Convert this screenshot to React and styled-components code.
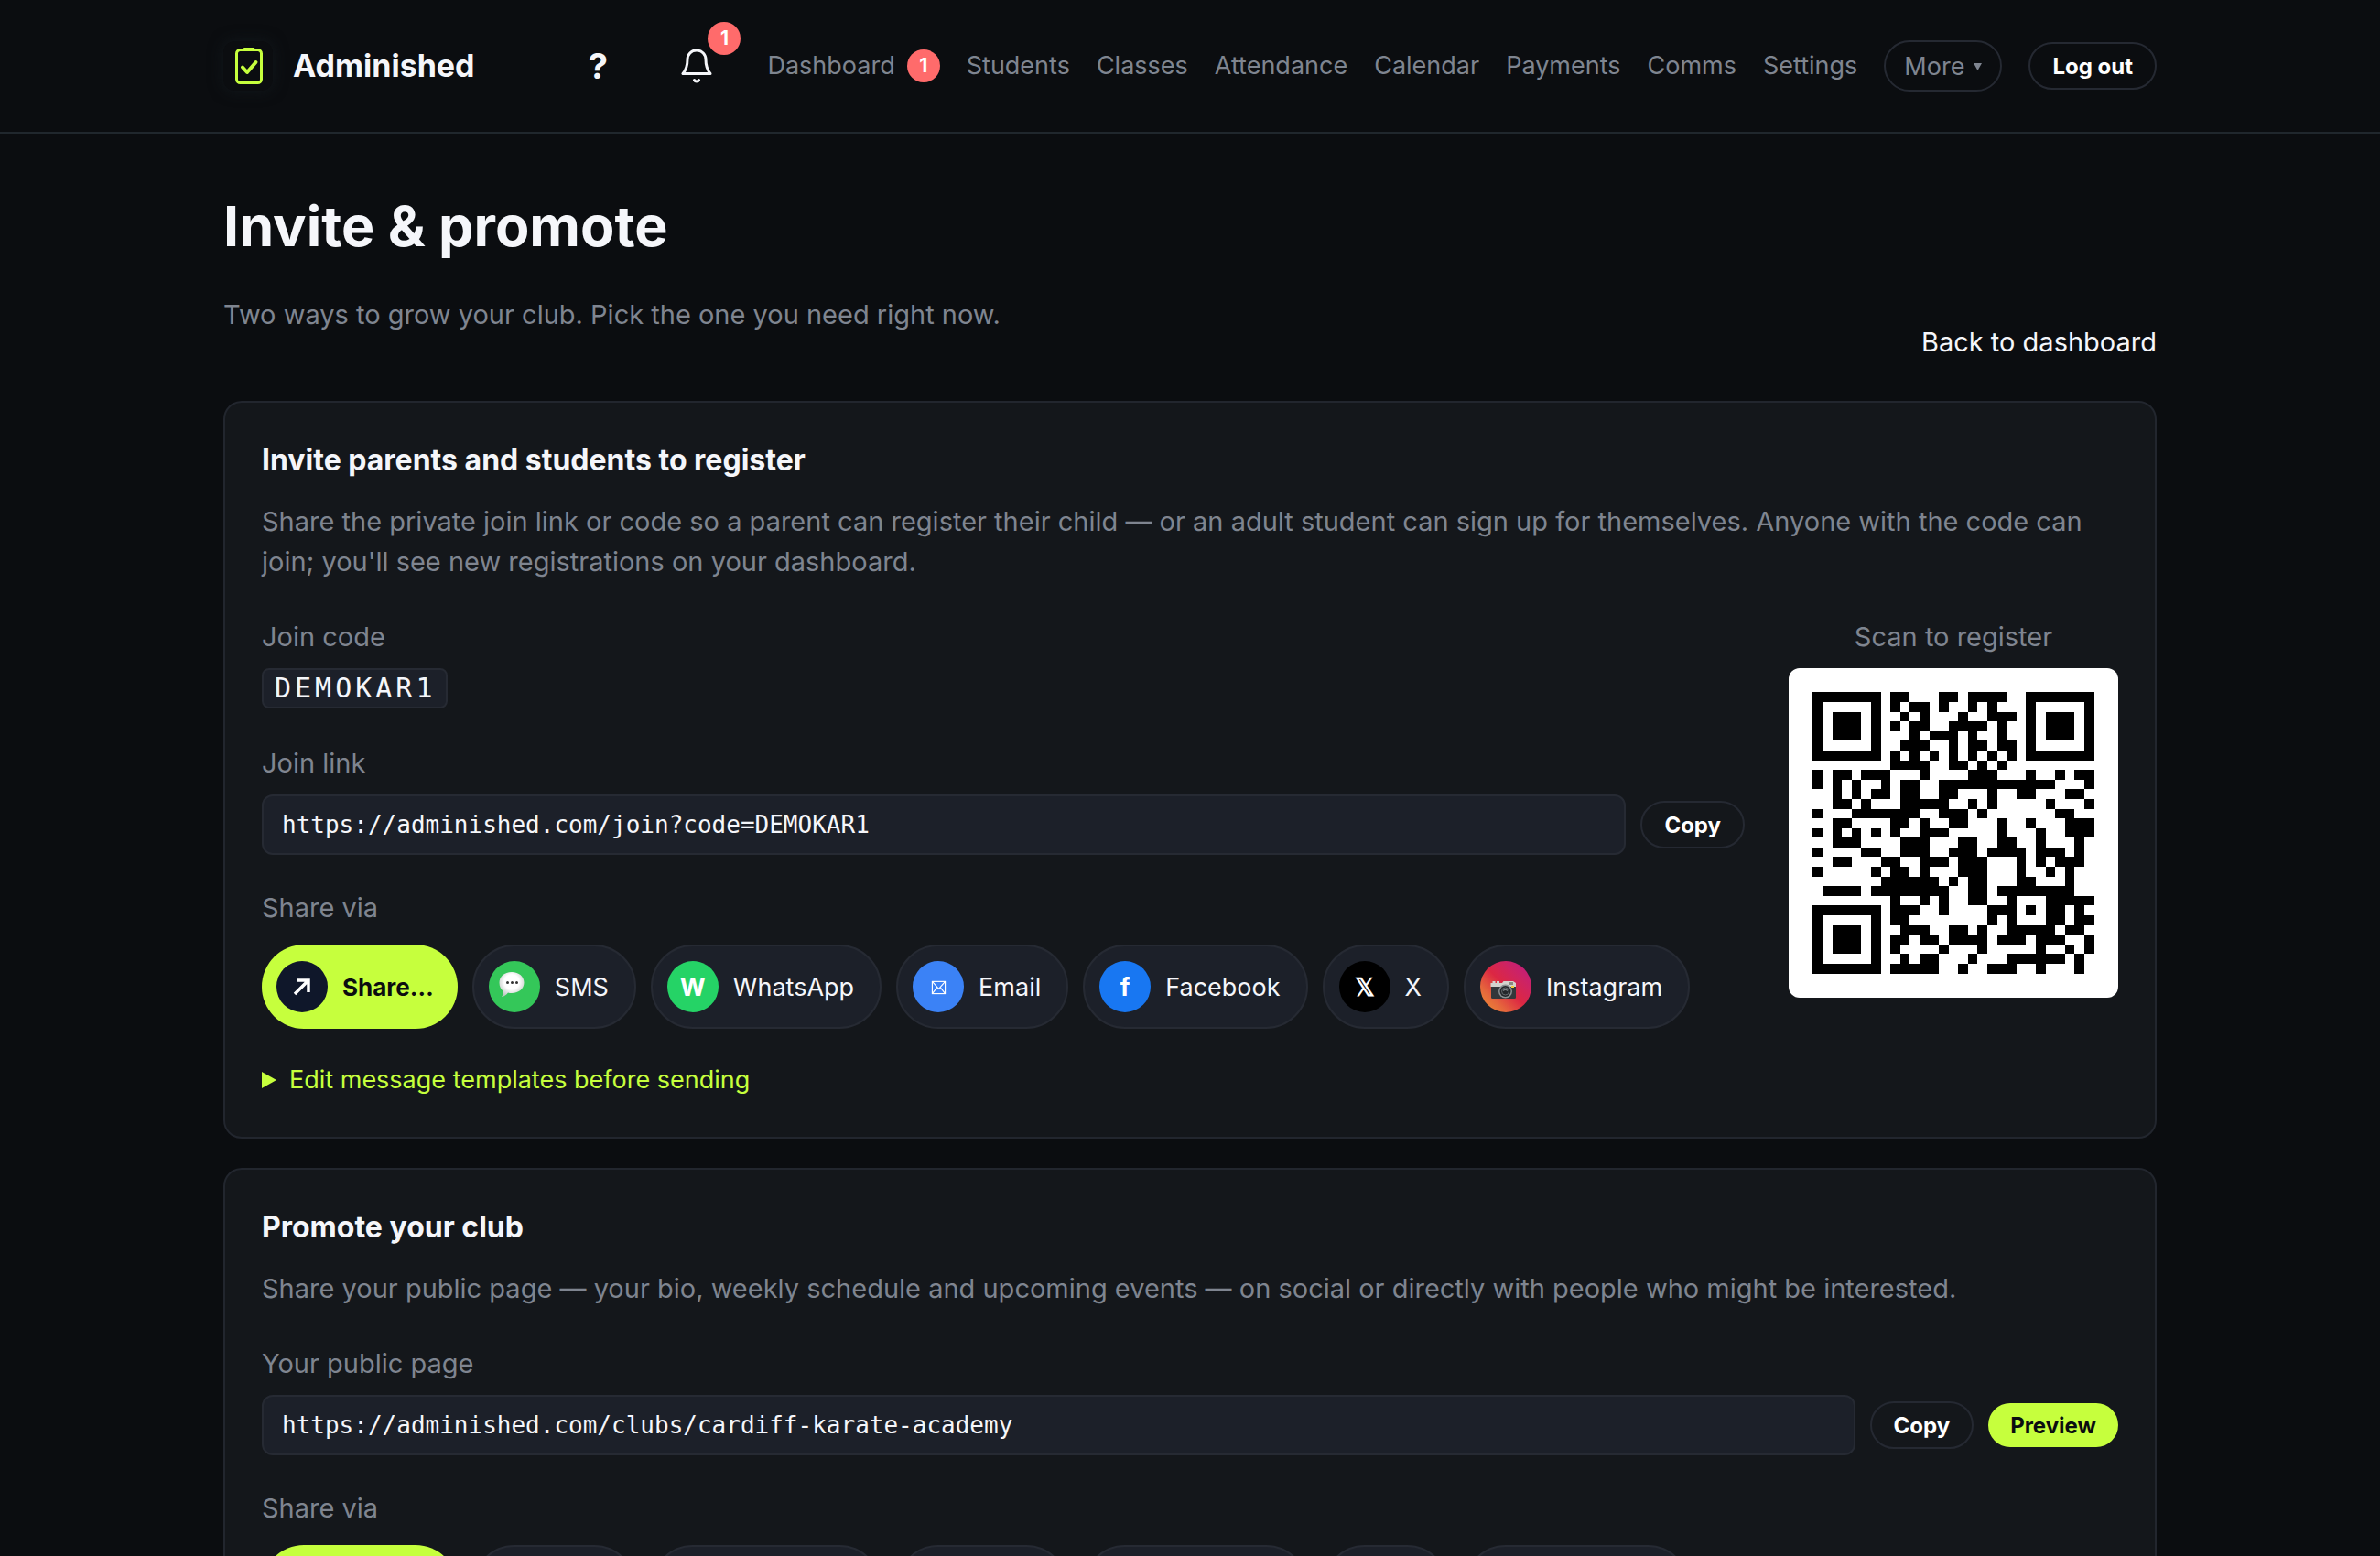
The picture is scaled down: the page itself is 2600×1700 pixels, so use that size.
import React from "react";
import styled, { createGlobalStyle, css } from "styled-components";

const GlobalStyle = createGlobalStyle`
  * {
    box-sizing: border-box;
  }

  html {
    scrollbar-width: none;
  }

  body {
    margin: 0;
    background: #0b0d10;
    color: #f5f6fa;
    font-family: Inter, "Liberation Sans", sans-serif;
    font-size: 29px;
    line-height: 44px;
  }

  h1, h2, p {
    margin: 0;
  }

  a {
    color: inherit;
    text-decoration: none;
  }

  button, input {
    font-family: inherit;
  }
`;

const Header = styled.header`
  border-bottom: 2px solid #20272d;
`;

const Wrap = styled.div`
  width: calc(100% - 64px);
  max-width: 2112px;
  margin: 0 auto;
`;

const HeaderInner = styled(Wrap)`
  height: 144px;
  display: flex;
  align-items: center;
  justify-content: space-between;
`;

const Brand = styled.a`
  display: flex;
  align-items: center;
  gap: 22px;
  font-size: 34px;
  font-weight: 700;

  svg {
    width: 54px;
    height: 54px;
    border-radius: 12px;
    box-shadow: 0 0 16px #12181c;
  }
`;

const Nav = styled.nav`
  display: flex;
  align-items: center;
  gap: 29px;
  font-size: 27px;
  color: #7f8590;
`;

const IconGroup = styled.div`
  display: flex;
  gap: 28px;
  margin-right: 8px;
`;

const IconButton = styled.button`
  position: relative;
  width: 80px;
  height: 80px;
  padding: 0;
  border: 0;
  background: none;
  color: #f5f6fa;
  font-size: 38px;
  font-weight: 700;

  svg {
    display: block;
    margin: 0 auto;
  }
`;

const Count = styled.span`
  display: inline-flex;
  align-items: center;
  justify-content: center;
  width: 36px;
  height: 36px;
  border-radius: 50%;
  background: #ff6b6b;
  color: #fff;
  font-size: 21px;
  line-height: 24px;
  font-weight: 700;
`;

const BellCount = styled(Count)`
  position: absolute;
  top: -8px;
  right: -8px;
`;

const NavLink = styled.a`
  display: flex;
  align-items: center;
  gap: 13px;
`;

const pill = css`
  border: 2px solid #252932;
  border-radius: 999px;
  background: none;
  white-space: nowrap;
`;

const MoreButton = styled.button`
  ${pill}
  display: flex;
  align-items: center;
  gap: 10px;
  height: 56px;
  padding: 0 20px;
  color: #7f8590;
  font-size: 27px;

  svg {
    width: 9px;
    height: 9px;
  }
`;

const Button = styled.button`
  ${pill}
  height: ${(props) => (props.$primary ? "48px" : "52px")};
  padding: 0 24px;
  color: #fff;
  font-size: 24px;
  font-weight: 700;

  ${(props) =>
    props.$primary &&
    css`
      border: 0;
      background: #c6ff3d;
      color: #0b0d10;
    `}
`;

const PageHead = styled.div`
  display: flex;
  align-items: flex-end;
  justify-content: space-between;
  padding: 64px 0 42px;
`;

const Title = styled.h1`
  margin-bottom: 38px;
  font-size: 61px;
  line-height: 74px;
  font-weight: 700;
`;

const Muted = styled.p`
  color: #7f8590;
`;

const Subtitle = styled(Muted)`
  margin-bottom: 30px;
`;

const Card = styled.section`
  margin-bottom: 32px;
  padding: 40px;
  border: 2px solid #22262e;
  border-radius: 20px;
  background: #14171b;
`;

const CardTitle = styled.h2`
  margin-bottom: 22px;
  font-size: 32px;
  line-height: 46px;
  font-weight: 700;
`;

const Columns = styled.div`
  display: flex;
  align-items: flex-start;
  gap: 48px;
  margin-top: 38px;
`;

const Main = styled.div`
  flex: 1;
  min-width: 0;
`;

const Label = styled.label`
  display: block;
  margin-bottom: 12px;
  color: #7f8590;
`;

const Code = styled.code`
  display: block;
  width: fit-content;
  height: 44px;
  margin-bottom: 38px;
  padding: 0 10px 0 12px;
  border: 2px solid #262a33;
  border-radius: 8px;
  background: #1c2029;
  font-family: "DejaVu Sans Mono", monospace;
  font-size: 30px;
  line-height: 40px;
  letter-spacing: 4px;
`;

const LinkRow = styled.div`
  display: flex;
  align-items: center;
  gap: 16px;
  margin-bottom: 36px;
`;

const LinkInput = styled.input`
  flex: 1;
  min-width: 0;
  height: 66px;
  padding: 0 20px;
  border: 2px solid #262a33;
  border-radius: 12px;
  background: #1c2029;
  color: #f5f6fa;
  font-family: "DejaVu Sans Mono", monospace;
  font-size: 26px;
`;

const Chips = styled.div`
  display: flex;
  flex-wrap: wrap;
  gap: 16px;
  padding-top: 6px;
`;

const Chip = styled.button`
  display: flex;
  align-items: center;
  gap: 16px;
  height: 92px;
  padding: 0 28px 0 16px;
  border: 2px solid #262a33;
  border-radius: 999px;
  background: #1c2029;
  color: #f5f6fa;
  font-size: 27px;

  ${(props) =>
    props.$primary &&
    css`
      padding-right: 26px;
      border: 0;
      background: #c6ff3d;
      color: #0b0d10;
      font-size: 26px;
      font-weight: 700;
    `}
`;

const ChipIcon = styled.span`
  display: flex;
  align-items: center;
  justify-content: center;
  width: 56px;
  height: 56px;
  border-radius: 50%;
  background: ${(props) => props.$color};
  color: #fff;
  font-size: 27px;
  font-weight: 700;
`;

const Templates = styled.details`
  margin-top: 34px;
  color: #c6ff3d;
  font-size: 27px;

  summary {
    display: flex;
    align-items: center;
    gap: 14px;
    list-style: none;
  }
`;

const Scan = styled.div`
  width: 360px;
  text-align: center;

  p {
    margin-bottom: 12px;
  }

  svg {
    display: block;
    width: 100%;
    border-radius: 12px;
    background: #fff;
  }
`;

const Logo = () => (
  <svg viewBox="0 0 54 54" fill="none" stroke="#c6ff3d" strokeLinecap="round" strokeLinejoin="round">
    <rect x="14.5" y="9.5" width="27" height="36" rx="4" strokeWidth="3" />
    <path d="M23 8.5h10" strokeWidth="3" />
    <path d="M21 28.5l5 5.5 9.5-11" strokeWidth="4" />
  </svg>
);

const Bell = () => (
  <svg width="36" height="40" viewBox="0 0 36 40" fill="none" stroke="#f5f6fa" strokeWidth="3" strokeLinecap="round" strokeLinejoin="round">
    <path d="M18 3C12 3 8 7.5 8 13c0 8-2 12-5 15.5h30C30 25 28 21 28 13 28 7.5 24 3 18 3z" />
    <path d="M15.5 35.5c1 2 4 2 5 0" />
  </svg>
);

const ArrowIcon = () => (
  <svg width="20" height="20" viewBox="0 0 20 20" fill="none" stroke="#fff" strokeWidth="3.5">
    <path d="M2 18L16 4M4 3h13v13" />
  </svg>
);

const SpeechIcon = () => (
  <svg width="56" height="56" viewBox="0 0 56 56">
    <defs>
      <radialGradient id="bubble" cx="50%" cy="40%" r="60%">
        <stop offset="0.5" stopColor="#fff" />
        <stop offset="1" stopColor="#c3c8c5" />
      </radialGradient>
    </defs>
    <path
      d="M25 12c8 0 13.5 5 13.5 11.500S33 35 25 35c-1.500 0-3 0-4-.5-2 2.500-4 4-7 4.500 1.500-2 2-4 2-6-3-2-4.500-5.500-4.500-9.500C11.500 17 17 12 25 12z"
      fill="url(#bubble)"
    />
    <circle cx="20.5" cy="23.5" r="1.5" fill="#333" />
    <circle cx="25.5" cy="23.5" r="1.5" fill="#333" />
    <circle cx="30.5" cy="23.5" r="1.5" fill="#333" />
  </svg>
);

const MailIcon = () => (
  <svg width="17" height="19" viewBox="0 0 18 20" fill="none" stroke="#fff" strokeWidth="1.2">
    <rect x="1.5" y="3.5" width="15" height="14" />
    <path d="M1.5 3.5L9 12l7.5-8.5M1.5 17.5l5.5-7M16.5 17.5l-5.5-7" />
  </svg>
);

const CameraIcon = () => (
  <svg width="56" height="56" viewBox="0 0 56 56">
    <path d="M12 26h27v13.5a1.5 1.5 0 0 1-1.5 1.5h-24a1.5 1.5 0 0 1-1.5-1.5z" fill="#34373a" />
    <path d="M11.5 24h2v-2h3v2h1.5v-2h3v2h3l1.5-2H36l3 2v4H11.5z" fill="#d4d2cd" />
    <path d="M32 23h4v3h-4z" fill="#8c8a80" />
    <path d="M34 27h3v2h-3z" fill="#f2cd3b" />
    <circle cx="27.5" cy="33" r="7.5" fill="#8d9193" />
    <circle cx="27.5" cy="33" r="6" fill="#25282b" />
    <circle cx="27.5" cy="33" r="4" fill="none" stroke="#62676b" />
    <path d="M25 32.5c1.5-1.5 3.5-1.5 5 0" fill="none" stroke="#7c8185" strokeWidth="1.5" />
  </svg>
);

// dark runs of each row, without the three finder squares
const qrRows = [
  "8-9 13-14 16-19",
  "8 10-11 13 16 18",
  "9 11 15 18-20",
  "8 10-11 14-17 19",
  "10 12-14 16 19",
  "9-11 14 16-17 19-20",
  "8 10 12 14 16 18 20",
  "8-11 14-15 17 19",
  "0 2-3 5-7 11 16-18 22 25 27-28",
  "0 2 4 7 9-10 13-24 28",
  "2 4 6-7 9-10 13-14 18 21-22 26-27",
  "2-3 5 9-13 16 18 24 28",
  "0 4-10 13-15 17 25-26",
  "2-3 8-9 11 14-15 19 22 26-28",
  "0 2 4 6 8 11-13 19 23 26-28",
  "2-4 9-11 15-16 19-20 23 27",
  "0 5-6 9-11 14-16 18-21 23-25 27",
  "2-3 7-8 11-13 15-17 21 23 25-27",
  "0 6 8-9 11 15-17 21 24 26",
  "7-12 14 16-17 21-22 26",
  "1-4 6-13 16-17 19-26",
  "8 11 13 16-17 20 24-28",
  "8-10 13 18-20 22 24-25 27",
  "8-9 18 20 24-25 27-28",
  "9-11 14-15 17 20-24 26-27",
  "8-9 11-12 14-17 19-21 23-25 28",
  "8 13 17 23 26 28",
  "9 11-12 16 20-25 27",
  "8-12 15 18-20 23 27",
];

const finders = [
  [0, 0],
  [22, 0],
  [0, 22],
];

const QrCode = () => {
  const path = qrRows
    .map((row, y) =>
      row
        .split(" ")
        .map((run) => {
          const [from, to = from] = run.split("-").map(Number);
          return `M${from} ${y}h${to - from + 1}v1H${from}z`;
        })
        .join("")
    )
    .join("");

  return (
    <svg viewBox="-2.5 -2.5 34 34" shapeRendering="crispEdges" role="img" aria-label="QR code">
      <path d={path} />
      {finders.map(([x, y]) => (
        <g key={`${x}-${y}`}>
          <rect x={x} y={y} width="7" height="7" />
          <rect x={x + 1} y={y + 1} width="5" height="5" fill="#fff" />
          <rect x={x + 2} y={y + 2} width="3" height="3" />
        </g>
      ))}
    </svg>
  );
};

const channels = [
  { name: "Share…", icon: <ArrowIcon />, color: "#0f172a", primary: true },
  { name: "SMS", icon: <SpeechIcon />, color: "#34c759" },
  { name: "WhatsApp", icon: "W", color: "#25d366" },
  { name: "Email", icon: <MailIcon />, color: "#3b82f6" },
  { name: "Facebook", icon: "f", color: "#1877f2" },
  { name: "X", icon: "𝕏", color: "#000" },
  {
    name: "Instagram",
    icon: <CameraIcon />,
    color: "linear-gradient(45deg, #f09433 0%, #e6683c 25%, #dc2743 50%, #cc2366 75%, #bc1888 100%)",
  },
];

const ShareVia = () => (
  <>
    <Label as="p">Share via</Label>
    <Chips>
      {channels.map((c) => (
        <Chip key={c.name} type="button" $primary={c.primary}>
          <ChipIcon $color={c.color}>{c.icon}</ChipIcon>
          {c.name}
        </Chip>
      ))}
    </Chips>
  </>
);

const links = ["Students", "Classes", "Attendance", "Calendar", "Payments", "Comms", "Settings"];

const App = () => {
  return (
    <>
      <GlobalStyle />
      <Header>
        <HeaderInner>
          <Brand href="#">
            <Logo />
            Adminished
          </Brand>
          <Nav>
            <IconGroup>
              <IconButton type="button" aria-label="Help">?</IconButton>
              <IconButton type="button" aria-label="Notifications">
                <Bell />
                <BellCount>1</BellCount>
              </IconButton>
            </IconGroup>
            <NavLink href="#">
              Dashboard <Count>1</Count>
            </NavLink>
            {links.map((link) => (
              <NavLink href="#" key={link}>
                {link}
              </NavLink>
            ))}
            <MoreButton type="button">
              More
              <svg viewBox="0 0 9 9" fill="currentColor">
                <path d="M0 1h9L4.5 9z" />
              </svg>
            </MoreButton>
            <Button type="button">Log out</Button>
          </Nav>
        </HeaderInner>
      </Header>

      <Wrap as="main">
        <PageHead>
          <div>
            <Title>Invite &amp; promote</Title>
            <Subtitle>Two ways to grow your club. Pick the one you need right now.</Subtitle>
          </div>
          <a href="#">Back to dashboard</a>
        </PageHead>

        <Card>
          <CardTitle>Invite parents and students to register</CardTitle>
          <Muted>
            Share the private join link or code so a parent can register their child — or an adult
            student can sign up for themselves. Anyone with the code can join; you'll see new
            registrations on your dashboard.
          </Muted>
          <Columns>
            <Main>
              <Label as="p">Join code</Label>
              <Code>DEMOKAR1</Code>
              <Label htmlFor="join-link">Join link</Label>
              <LinkRow>
                <LinkInput id="join-link" readOnly value="https://adminished.com/join?code=DEMOKAR1" />
                <Button type="button">Copy</Button>
              </LinkRow>
              <ShareVia />
              <Templates>
                <summary>
                  <svg width="16" height="18" viewBox="0 0 16 18" fill="currentColor">
                    <path d="M0 0l16 9-16 9z" />
                  </svg>
                  Edit message templates before sending
                </summary>
              </Templates>
            </Main>
            <Scan>
              <Muted>Scan to register</Muted>
              <QrCode />
            </Scan>
          </Columns>
        </Card>

        <Card>
          <CardTitle>Promote your club</CardTitle>
          <Muted>
            Share your public page — your bio, weekly schedule and upcoming events — on social or
            directly with people who might be interested.
          </Muted>
          <Columns>
            <Main>
              <Label htmlFor="public-link">Your public page</Label>
              <LinkRow>
                <LinkInput id="public-link" readOnly value="https://adminished.com/clubs/cardiff-karate-academy" />
                <Button type="button">Copy</Button>
                <Button type="button" $primary>Preview</Button>
              </LinkRow>
              <ShareVia />
            </Main>
          </Columns>
        </Card>
      </Wrap>
    </>
  );
};

export default App;
